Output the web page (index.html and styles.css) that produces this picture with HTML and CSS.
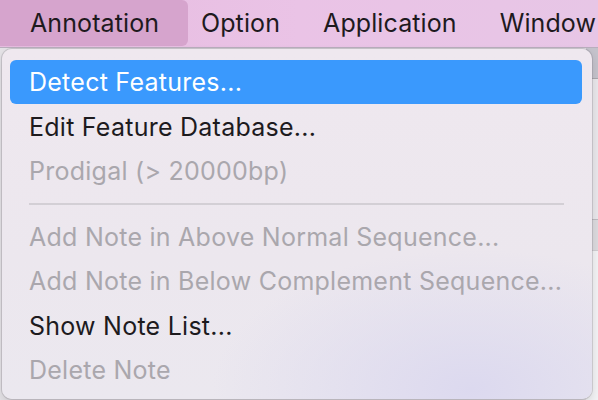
FILE: index.html
```html
<!DOCTYPE html>
<html>
<head>
<meta charset="utf-8">
<link rel="stylesheet" href="styles.css">
</head>
<body>
<div class="screen">
  <div class="menubar">
    <div class="menu-title active">Annotation</div>
    <div class="menu-title">Option</div>
    <div class="menu-title">Application</div>
    <div class="menu-title">Window</div>
  </div>
  <div class="desktop">
    <div class="window-strip">
      <div class="strip-top"></div>
      <div class="strip-mid"></div>
      <div class="strip-low"></div>
      <div class="strip-bottom"></div>
    </div>
  </div>
  <div class="dropdown">
    <div class="item selected">Detect Features...</div>
    <div class="item">Edit Feature Database...</div>
    <div class="item disabled">Prodigal (&gt; 20000bp)</div>
    <div class="separator"></div>
    <div class="item disabled">Add Note in Above Normal Sequence...</div>
    <div class="item disabled">Add Note in Below Complement Sequence...</div>
    <div class="item">Show Note List...</div>
    <div class="item disabled">Delete Note</div>
  </div>
</div>
</body>
</html>
```

FILE: styles.css
```css
html, body {
  margin: 0;
  padding: 0;
}
body {
  width: 598px;
  height: 400px;
  overflow: hidden;
  font-family: "Inter", "Noto Sans", sans-serif;
}
.screen {
  position: relative;
  width: 598px;
  height: 400px;
  overflow: hidden;
  background: #e4e2e6;
}
.menubar {
  height: 47px;
  display: flex;
  align-items: stretch;
  background: linear-gradient(90deg, #e6bbdf 0%, #eac3e6 50%, #e7c6e6 100%);
  border-bottom: 1px solid #b9aebd;
  white-space: nowrap;
}
.menu-title {
  flex: none;
  display: flex;
  align-items: center;
  padding: 0 21.5px 1px;
  font-size: 25px;
  color: #1e1a1e;
  letter-spacing: 0.1px;
}
.menu-title.active {
  width: 188px;
  box-sizing: border-box;
  padding-left: 30px;
  padding-right: 0;
  margin-right: -8.5px;
  margin-bottom: 1px;
  background: #d6a4cd;
  border-radius: 0 6px 6px 0;
}
.desktop {
  height: 352px;
  display: flex;
  justify-content: flex-end;
}
.window-strip {
  width: 12px;
  display: flex;
  flex-direction: column;
}
.strip-top {
  height: 30px;
  background: #c4c2cb;
}
.strip-mid {
  height: 140px;
  background: #e9e7eb;
  border-top: 1px solid #a9a7ad;
}
.strip-low {
  height: 30px;
  background: #dcdade;
  border-top: 1px solid #bdbbc0;
}
.strip-bottom {
  flex: 1;
  background: #f2f2f4;
  border-top: 1px solid #d0ced2;
}
.dropdown {
  position: absolute;
  left: 2px;
  top: 49px;
  width: 590px;
  height: 350px;
  box-sizing: border-box;
  padding-top: 11px;
  border-radius: 10px;
  background: radial-gradient(ellipse 260px 140px at 470px 340px, #dcd9ef 0%, rgba(220,217,239,0) 100%),
              linear-gradient(180deg, #efe8ef 0%, #ece7ee 60%, #ebe8ef 100%);
  box-shadow: 0 0 0 1px rgba(120,110,125,0.25), 0 4px 10px rgba(0,0,0,0.12);
  display: flex;
  flex-direction: column;
  white-space: nowrap;
}
.item {
  height: 44.5px;
  flex: none;
  display: flex;
  align-items: center;
  margin: 0 10px 0 8px;
  padding-left: 19px;
  border-radius: 6px;
  font-size: 25px;
  letter-spacing: 0.25px;
  color: #1d1b1e;
}
.item.selected {
  background: #3a99fd;
  color: #ffffff;
  height: 43.5px;
  margin-bottom: 1px;
}
.item.disabled {
  color: #aaa7ad;
}
.separator {
  height: 21px;
  flex: none;
  margin: 0 28px 0 27px;
  display: flex;
  align-items: center;
}
.separator::before {
  content: "";
  display: block;
  width: 100%;
  height: 2px;
  background: #d3cfd5;
}
```
